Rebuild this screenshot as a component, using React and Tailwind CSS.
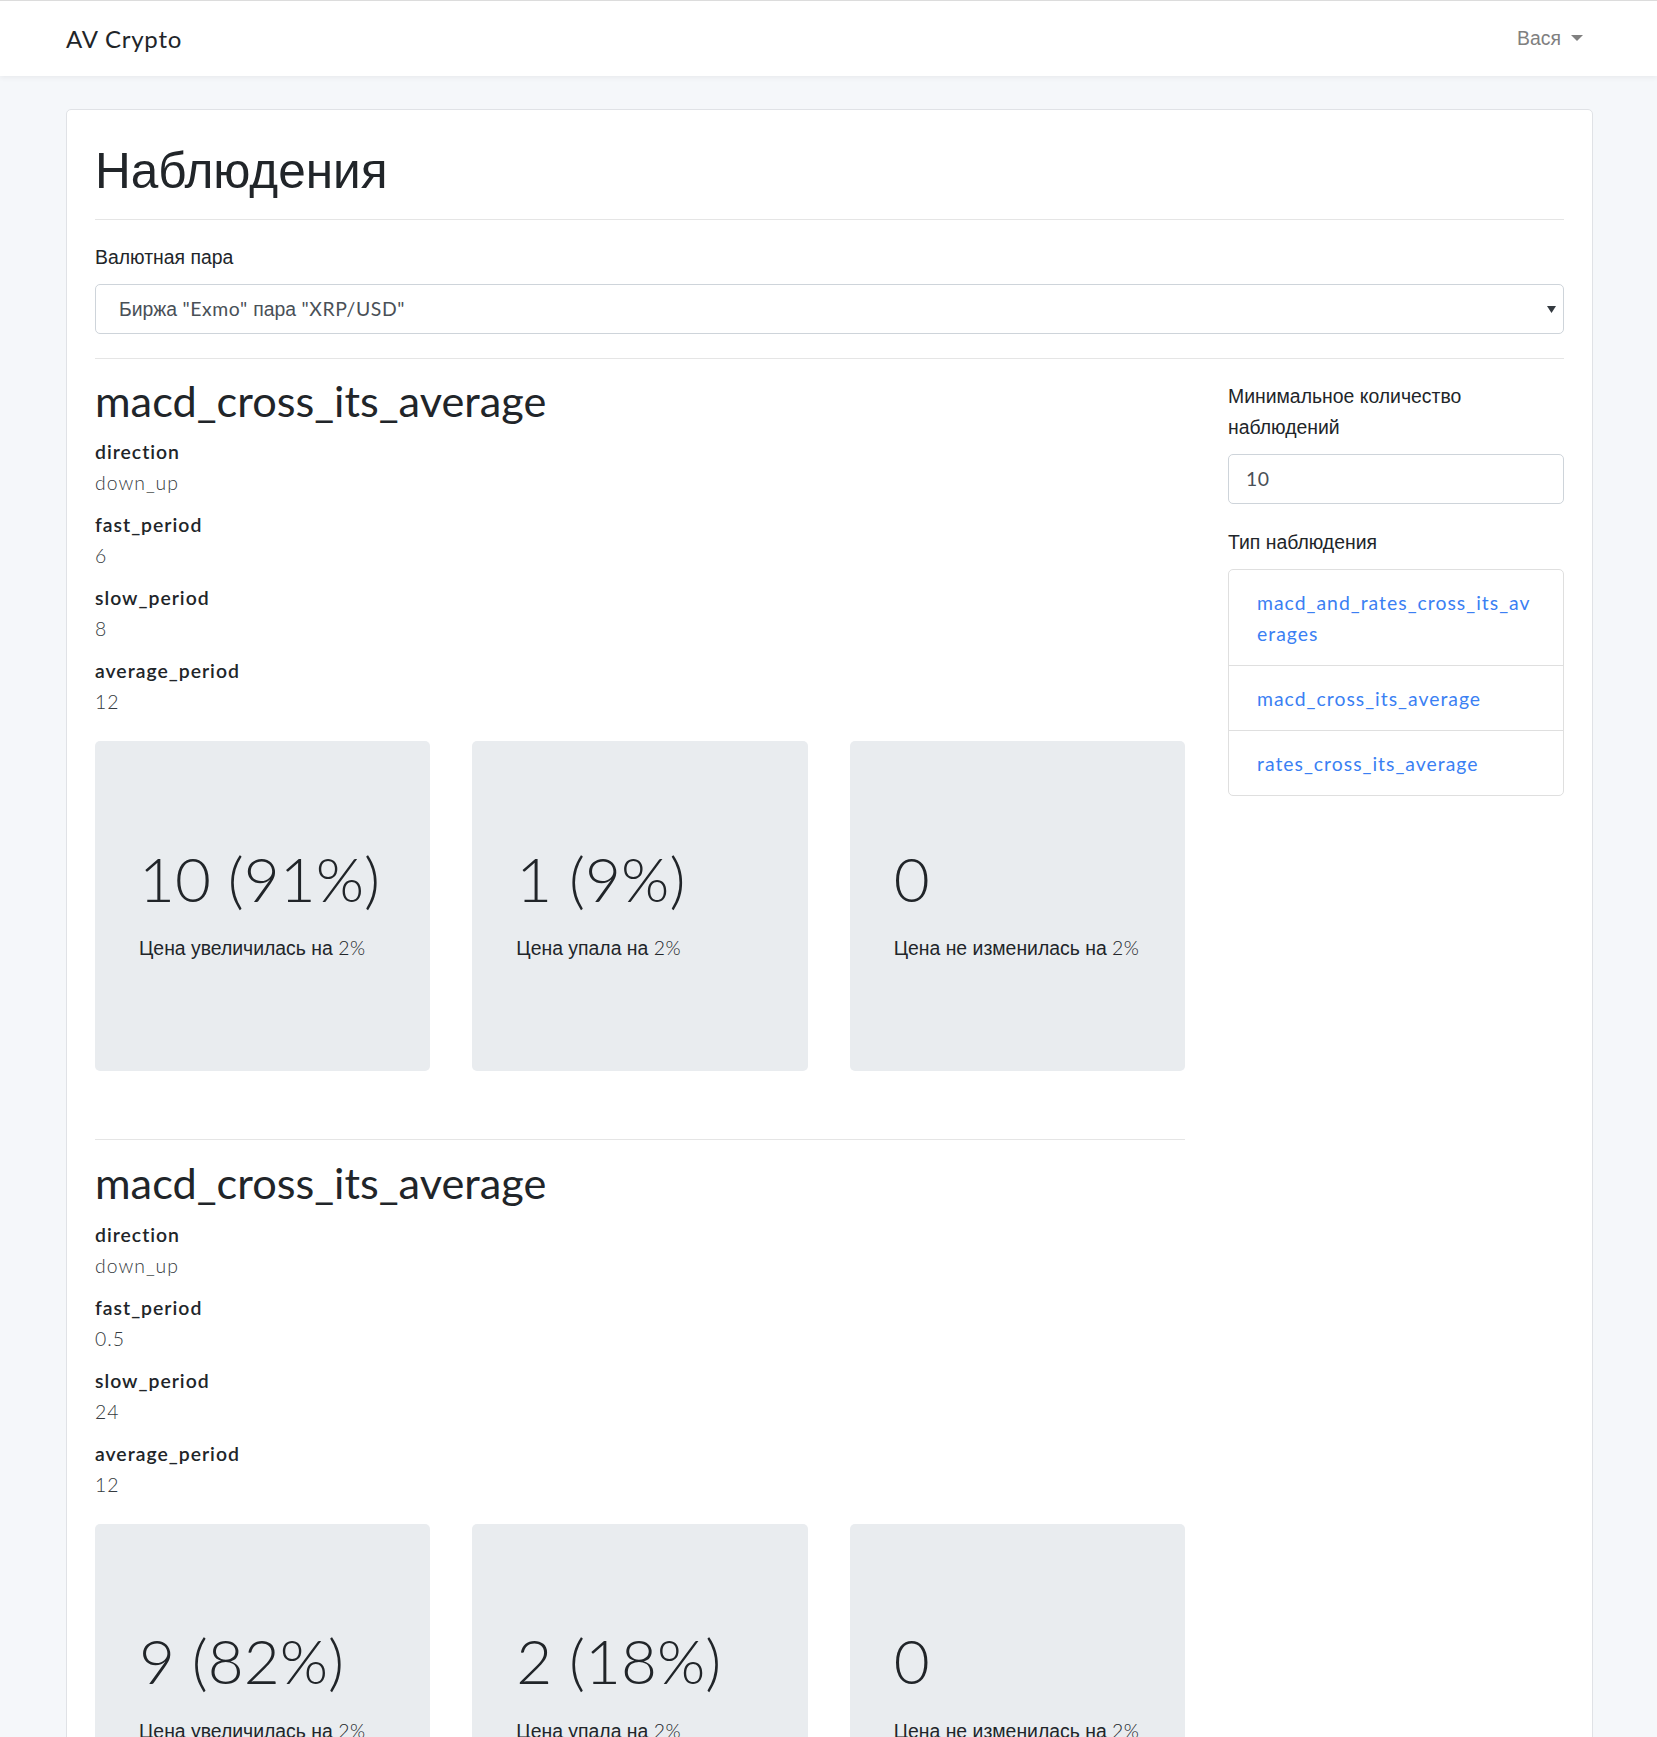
const ru = "font-['Liberation_Sans',Arial,sans-serif]"
const lat = "font-['Lato',sans-serif]"

const sections = [
  {
    name: 'macd_cross_its_average',
    params: [
      ['direction', 'down_up'],
      ['fast_period', '6'],
      ['slow_period', '8'],
      ['average_period', '12'],
    ],
    stats: [
      ['10 (91%)', 'Цена увеличилась на '],
      ['1 (9%)', 'Цена упала на '],
      ['0', 'Цена не изменилась на '],
    ],
  },
  {
    name: 'macd_cross_its_average',
    params: [
      ['direction', 'down_up'],
      ['fast_period', '0.5'],
      ['slow_period', '24'],
      ['average_period', '12'],
    ],
    stats: [
      ['9 (82%)', 'Цена увеличилась на '],
      ['2 (18%)', 'Цена упала на '],
      ['0', 'Цена не изменилась на '],
    ],
  },
]

function StatCard({ big, text }) {
  return (
    <div className="flex h-[330px] flex-col justify-center rounded-[5px] bg-[#e9ecef] pb-[8px] pl-[44px]">
      <div className={`${lat} mb-[17px] text-[62px] font-light leading-[1.2] text-[#212529]`}>{big}</div>
      <div className="text-[19.4px] leading-[31px] text-[#212529]">
        <span className={ru}>{text}</span>
        <span className={`${lat} font-light tracking-[0.5px]`}>2%</span>
      </div>
    </div>
  )
}

function Section({ section, first }) {
  return (
    <div>
      {!first && <hr className="mb-[17px] mt-[68px] border-t border-[#e5e5e5]" />}
      <h2 className={`${lat} mb-[9.5px] text-[43.3px] font-normal leading-[1.2] text-[#212529]`}>{section.name}</h2>
      <dl className={`${lat} text-[19.4px] tracking-[1px] text-[#212529]`}>
        {section.params.map(([k, v]) => (
          <div key={k}>
            <dt className="font-semibold leading-[31px]">{k}</dt>
            <dd className="mb-[11px] font-light leading-[31px] text-[#343a40]">{v}</dd>
          </div>
        ))}
      </dl>
      <div className="mt-[24px] grid grid-cols-3 gap-[42px]">
        {section.stats.map(([big, text], i) => (
          <StatCard key={i} big={big} text={text} />
        ))}
      </div>
    </div>
  )
}

export default function App() {
  const types = [
    ['macd_and_rates_cross_its_av', 'erages'],
    ['macd_cross_its_average'],
    ['rates_cross_its_average'],
  ]
  return (
    <div className={`min-h-screen bg-[#f5f7fa] ${lat} text-[#212529]`}>
      <nav className="flex h-[76px] items-center justify-between border-t border-[#dcdcdc] bg-white pl-[66px] pr-[64px] shadow-[0_2px_5px_rgba(0,0,0,0.05)]">
        <span className={`${lat} text-[24px] font-normal tracking-[0.8px] text-[#212529]`}>AV Crypto</span>
        <span className="mr-[10px] flex items-center text-[19.4px] text-[#808080]">
          <span className={ru}>Вася</span>
          <span className="ml-[10px] inline-block h-0 w-0 border-x-[6px] border-t-[6px] border-x-transparent border-t-[#808080]" />
        </span>
      </nav>

      <div className="pl-[66px] pr-[64px] pt-[33px]">
        <div className="rounded-[5px] border border-[#e0e2e6] bg-white px-[28px] pb-[40px] pt-[32px]">
          <h1 className={`${ru} text-[49.5px] font-normal leading-[58px] text-[#212529]`}>Наблюдения</h1>
          <hr className="mb-[22px] mt-[19px] border-t border-[#e5e5e5]" />

          <label className={`${ru} mb-[11px] block text-[19.4px] leading-[31px]`}>Валютная пара</label>
          <div className="flex h-[50px] items-center justify-between rounded-[5px] border border-[#ced4da] pl-[23px] pr-[8px] text-[19.4px] text-[#495057]">
            <span>
              <span className={ru}>Биржа </span>
              <span className={`${lat} tracking-[0.6px]`}>"Exmo"</span>
              <span className={ru}> пара </span>
              <span className={`${lat} tracking-[0.6px]`}>"XRP/USD"</span>
            </span>
            <svg width="9" height="7" viewBox="0 0 9 7" className="mr-[-1px]">
              <path d="M0 0h9L4.5 7z" fill="#343a40" />
            </svg>
          </div>
          <hr className="mb-[16px] mt-[24px] border-t border-[#e5e5e5]" />

          <div className="flex gap-[43px]">
            <div className="w-[1090px] shrink-0">
              {sections.map((s, i) => (
                <Section key={i} section={s} first={i === 0} />
              ))}
            </div>

            <div className="flex-1 pt-[6px]">
              <label className={`${ru} mb-[11px] block text-[19.4px] leading-[31px]`}>
                Минимальное количество наблюдений
              </label>
              <div className="flex h-[50px] items-center rounded-[5px] border border-[#ced4da] pl-[17px] text-[19.4px] text-[#495057]">
                <span className={`${lat} tracking-[0.6px]`}>10</span>
              </div>

              <label className={`${ru} mb-[11px] mt-[23px] block text-[19.4px] leading-[31px]`}>Тип наблюдения</label>
              <div className="overflow-hidden rounded-[5px] border border-[#dfdfdf]">
                {types.map((t, i) => (
                  <div
                    key={i}
                    className={`px-[28px] pb-[16px] pt-[17px] text-[19.4px] leading-[31px] ${i > 0 ? 'border-t border-[#dfdfdf]' : ''}`}
                  >
                    <a className={`${lat} tracking-[1px] text-[#3b7ff3]`}>
                      {t[0]}
                      {t[1] && <br />}
                      {t[1]}
                    </a>
                  </div>
                ))}
              </div>
            </div>
          </div>
        </div>
      </div>
    </div>
  )
}
